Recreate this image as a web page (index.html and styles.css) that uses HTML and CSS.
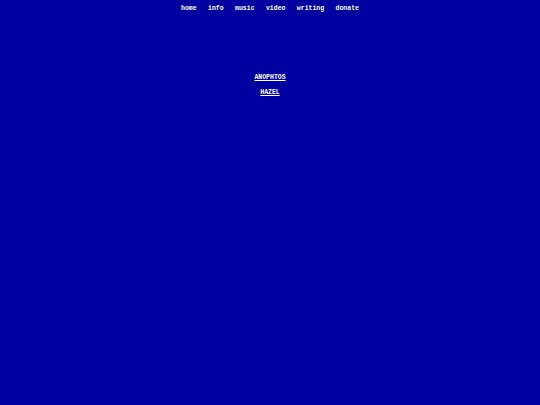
FILE: index.html
```html
<!DOCTYPE html>
<html>
<head>
<meta charset="utf-8">
<link rel="stylesheet" href="styles.css">
</head>
<body>
<nav class="nav">
  <a href="#">home</a>
  <a href="#">info</a>
  <a href="#">music</a>
  <a href="#">video</a>
  <a href="#">writing</a>
  <a href="#">donate</a>
</nav>
<main class="list">
  <a class="item" href="#">ANOPHTOS</a>
  <a class="item" href="#">HAZEL</a>
</main>
</body>
</html>
```
FILE: styles.css
```css
html, body {
  margin: 0;
  padding: 0;
  height: 100%;
  background: #0000a0;
  font-family: "Liberation Mono", "DejaVu Sans Mono", monospace;
  font-weight: bold;
  font-size: 6.5px;
  color: #fff;
}
.nav {
  display: flex;
  justify-content: center;
  gap: 11.4px;
  padding-top: 5px;
  line-height: 7px;
}
.nav a {
  color: #fff;
  text-decoration: none;
}
.list {
  display: flex;
  flex-direction: column;
  align-items: center;
  gap: 8px;
  padding-top: 62px;
  line-height: 7px;
}
.item {
  color: #fff;
  text-decoration: underline;
}
```
